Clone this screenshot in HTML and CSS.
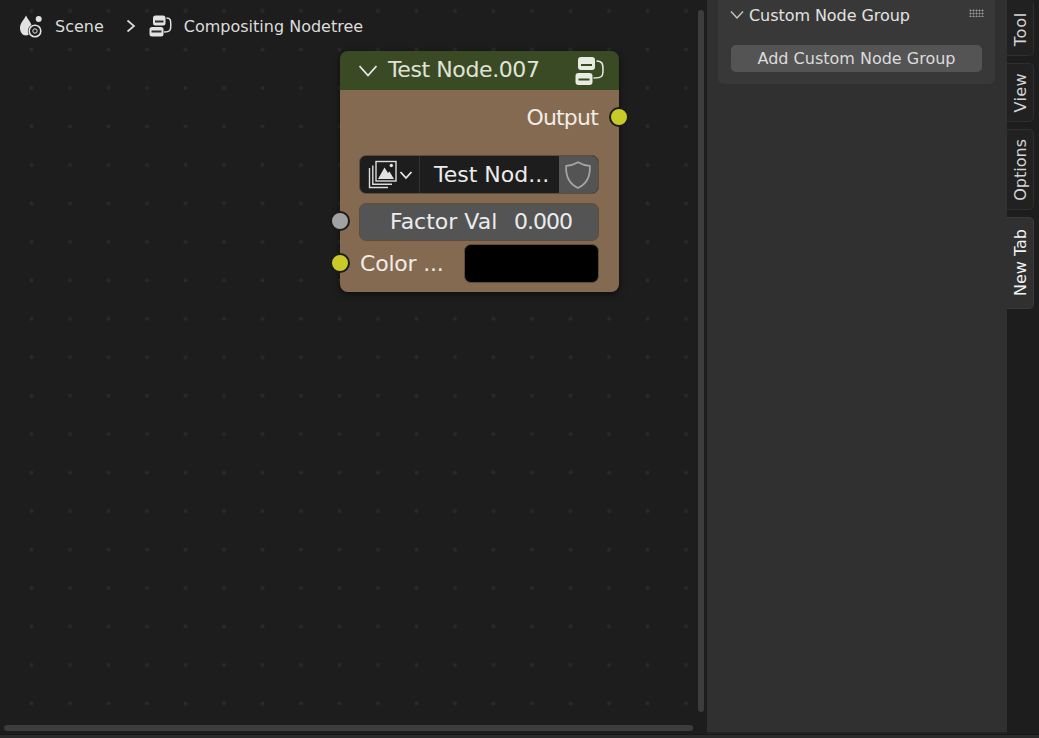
FILE: index.html
```html
<!DOCTYPE html>
<html lang="en">
<head>
<meta charset="utf-8">
<title>Compositing Nodetree</title>
<link rel="stylesheet" href="styles.css">
</head>
<body>
<div class="app">
  <div class="main">
    <section class="editor">
      <nav class="crumbs">
        <svg class="crumb-icon scene-icon" viewBox="0 0 24 24" width="24" height="24">
          <path class="fill" d="M7 1.500C9 6 13 9 13 14C13 18 10 21.500 7 21.500C3.500 21.500 1 18 1 14C1 9 5 6 7 1.500Z"/>
          <circle class="fill" cx="19.700" cy="5" r="3"/>
          <circle class="halo" cx="16" cy="17" r="7.200"/>
          <circle class="ring" cx="16" cy="17" r="5.800"/>
          <circle class="ring thin" cx="16" cy="17" r="2.200"/>
        </svg>
        <span class="crumb-text scene-text">Scene</span>
        <svg class="crumb-chevron" viewBox="0 0 12 16" width="12" height="16"><path d="M2.500 2.500L9 8L2.500 13.500"/></svg>
        <svg class="crumb-icon tree-icon" viewBox="0 0 24 24" width="24" height="24">
          <rect class="fill" x="4" y="1.500" width="12.500" height="10" rx="2.500"/>
          <rect class="fill" x="0.500" y="13" width="14" height="9.500" rx="2.500"/>
          <path class="slot" d="M6 7.500H14.500M2.500 17.500H12.500"/>
          <path class="link" d="M17.500 4C21.500 4 21.800 6 21.800 11C21.800 16 21.500 18 15 18"/>
        </svg>
        <span class="crumb-text">Compositing Nodetree</span>
      </nav>

      <article class="node">
        <header class="node-header">
          <svg class="chevron-down big" viewBox="0 0 18 12" width="18" height="12"><path d="M0.500 1L9 10.500L17.500 1"/></svg>
          <span class="node-title">Test Node.007</span>
          <svg class="node-icon tree-icon" viewBox="0 0 30 30" width="30" height="30">
            <rect class="fill" x="3" y="1" width="17" height="13" rx="3"/>
            <rect class="fill" x="0.500" y="17" width="17" height="12" rx="3"/>
            <path class="slot" d="M6 9H17M3.500 23.500H14.500"/>
            <path class="link" d="M21.500 5C27.500 5 28 8 28 14C28 20 27.500 22 18.500 22"/>
          </svg>
        </header>
        <div class="node-body">
          <div class="row output-row">
            <span class="label output-label">Output</span>
            <span class="socket yellow socket-right"></span>
          </div>
          <div class="id-picker">
            <div class="picker-browse">
              <svg class="image-icon" viewBox="0 0 30 30" width="30" height="30">
                <path class="frame" d="M1.500 8V27.500H20M4.800 5.500V24.200H24"/>
                <rect class="frame" x="8" y="1.500" width="20" height="19.500"/>
                <path class="fill" d="M10 19L16.500 7.500L20 13L21.500 11.500L26 19Z"/>
                <circle class="fill" cx="23.300" cy="5.500" r="1.700"/>
              </svg>
              <svg class="chevron-down" viewBox="0 0 14 10" width="14" height="10"><path d="M1.500 2L7 8L12.500 2"/></svg>
            </div>
            <div class="picker-name">Test Nod...</div>
            <div class="picker-shield">
              <svg class="shield" viewBox="0 0 28 30" width="28" height="30"><path d="M14 2.200C17.500 4.300 21 5.500 25.800 5.800C26.500 16 23.500 23.500 14 28C4.500 23.500 1.500 16 2.200 5.800C7 5.500 10.500 4.300 14 2.200Z"/></svg>
            </div>
          </div>
          <div class="row factor-row">
            <span class="socket grey socket-left"></span>
            <div class="slider"><span>Factor Val</span><span class="slider-value">0.000</span></div>
          </div>
          <div class="row color-row">
            <span class="socket yellow socket-left"></span>
            <span class="label color-label">Color ...</span>
            <div class="swatch"></div>
          </div>
        </div>
      </article>

      <div class="scroll scroll-v"></div>
      <div class="scroll scroll-h"></div>
    </section>

    <aside class="sidebar">
      <div class="panel">
        <div class="panel-head">
          <svg class="chevron-down small" viewBox="0 0 14 10" width="14" height="10"><path d="M1 1.500L7 8L13 1.500"/></svg>
          <span class="panel-title">Custom Node Group</span>
          <span class="grip"></span>
        </div>
        <button class="panel-button" type="button">Add Custom Node Group</button>
      </div>
    </aside>

    <div class="tabs">
      <div class="tab tab-tool"><span>Tool</span></div>
      <div class="tab tab-view"><span>View</span></div>
      <div class="tab tab-options"><span>Options</span></div>
      <div class="tab tab-new active"><span>New Tab</span></div>
    </div>
  </div>
  <div class="statusline"></div>
</div>
</body>
</html>
```
FILE: styles.css
```css
* { box-sizing: border-box; }
html, body { margin: 0; height: 100%; background: #1d1d1d; overflow: hidden; }
body { font-family: "DejaVu Sans", "Liberation Sans", sans-serif; color: #e6e6e6; }

.app { width: 1039px; height: 738px; display: flex; flex-direction: column; }
.main { flex: 1; display: flex; min-height: 0; }
.statusline { height: 4px; background: #2b2b2b; border-top: 1px solid #191919; }

/* node editor */
.editor {
  position: relative;
  width: 707px;
  background-color: #1d1d1d;
  background-image: radial-gradient(circle at center, #2c2c2c 0, #292929 1.2px, rgba(29,29,29,0) 2.6px);
  background-size: 38.5px 38.47px;
  background-position: 12.25px 30.25px;
}

.crumbs { position: absolute; left: 19px; top: 14px; display: flex; align-items: center; height: 24px; }
.crumb-text { font-size: 16px; color: #dcdcdc; white-space: nowrap; }
.crumb-icon { display: block; }
.scene-text { margin-left: 12px; }
.crumb-chevron { margin: 0 12px 0 21px; }
.crumb-chevron path { fill: none; stroke: #dcdcdc; stroke-width: 1.7; }
.tree-icon { margin-right: 11px; }

.fill { fill: #e2e2e2; stroke: none; }
.halo { fill: #1d1d1d; stroke: none; }
.ring { fill: #1d1d1d; stroke: #e2e2e2; stroke-width: 1.6; }
.ring.thin { stroke-width: 1; }
.slot { fill: none; stroke: #2f2f2f; stroke-width: 1.800; }
.link { fill: none; stroke: #e2e2e2; stroke-width: 1.500; }

.chevron-down path { fill: none; stroke: #e8e8e8; stroke-width: 1.800; }

/* node */
.node {
  position: absolute;
  left: 340px;
  top: 51px;
  width: 279px;
  border-radius: 8px;
  box-shadow: 0 2px 6px rgba(0,0,0,.55);
}
.node-header {
  height: 39px;
  display: flex;
  align-items: center;
  padding: 0 14px 0 19px;
  background: #3a4a25;
  border-radius: 8px 8px 0 0;
}
.node-title { font-size: 22px; letter-spacing: -.4px; color: #e0e4d8; margin: 0 0 2px 11px; flex: 1; white-space: nowrap; }
.node-icon.tree-icon { margin: 0; }
.node-icon .slot { stroke: #3a4a25; }
.node-icon .fill { fill: #e8ebe2; }
.node-icon .link { stroke: #e8ebe2; }

.node-body {
  background: #856a52;
  border-radius: 0 0 8px 8px;
  padding: 14px 20px 9px 19px;
  display: flex;
  flex-direction: column;
}
.row { position: relative; display: flex; align-items: center; }
.label { font-size: 22px; color: #f0ece6; white-space: nowrap; }
.output-label { letter-spacing: -.8px; margin-right: 1px; }
.output-row { height: 26px; margin-bottom: 25px; justify-content: flex-end; }

.socket {
  position: absolute;
  top: 50%;
  width: 20px;
  height: 20px;
  margin-top: -10px;
  border-radius: 50%;
  border: 2px solid #1b1b1b;
}
.yellow { background: #c9ca28; }
.grey { background: #a2a2a2; }
.socket-right { right: -30px; }
.socket-left { left: -29px; margin-top: -11px; }

.id-picker {
  height: 39px;
  display: flex;
  border-radius: 7px;
  overflow: hidden;
  background: #1d1d1d;
  border: 1px solid #5f4c3b;
}
.picker-browse { width: 60px; display: flex; align-items: center; padding-left: 8px; gap: 1px; border-right: 1px solid #333; }
.image-icon .frame { fill: none; stroke: #dcdcdc; stroke-width: 1.400; }
.image-icon { flex: none; }
.picker-name { flex: 1; font-size: 22px; color: #ececec; display: flex; align-items: center; padding-left: 14px; white-space: nowrap; }
.picker-shield { width: 39px; background: #545454; display: flex; align-items: center; justify-content: center; padding-right: 2px; }
.shield path { fill: none; stroke: #a6a6a6; stroke-width: 1.700; }

.factor-row { height: 38px; margin-top: 9px; }
.slider {
  flex: 1;
  height: 38px;
  display: flex;
  align-items: center;
  padding: 0 26px 1px 30px;
  justify-content: space-between;
  font-size: 22px;
  color: #ececec;
  background: #545454;
  border-radius: 7px;
  border: 1px solid #5f4c3b;
}
.slider-value { letter-spacing: -1px; }
.color-row { height: 39px; margin-top: 3px; justify-content: space-between; }
.color-label { margin-left: 1px; letter-spacing: -.2px; }
.swatch { width: 135px; height: 39px; background: #000; border-radius: 7px; border: 1px solid #5f4c3b; }

.scroll { position: absolute; background: #3d3d3d; border-radius: 3px; }
.scroll-v { left: 698px; top: 10px; width: 6px; height: 702px; }
.scroll-h { left: 4px; top: 725px; width: 689px; height: 6px; }

/* sidebar */
.sidebar { width: 300px; background: #303030; padding: 0 12px 0 11px; border-bottom: 2px solid #232323; }
.panel { height: 84px; background: #383838; border-radius: 0 0 6px 6px; padding: 0 13px; position: relative; }
.panel-head { height: 30px; display: flex; align-items: center; }
.chevron-down.small { margin: 0 5px 0 -1px; }
.chevron-down.small path { stroke: #c8c8c8; stroke-width: 1.400; }
.panel-title { font-size: 16px; letter-spacing: -.06px; color: #e2e2e2; white-space: nowrap; flex: 1; }
.grip {
  width: 15px;
  height: 8px;
  margin-right: -2px;
  margin-top: -4px;
  background-image: radial-gradient(circle, #9a9a9a .9px, transparent 1.100px);
  background-size: 3px 3px;
}
.panel-button {
  display: block;
  width: 251px;
  height: 27px;
  margin-top: 15px;
  padding: 0;
  font: inherit;
  font-size: 16px;
  color: #dcdcdc;
  background: #545454;
  border: 0;
  border-radius: 5px;
  text-align: center;
}

/* tabs */
.tabs { flex: 1; background: #1d1d1d; display: flex; flex-direction: column; gap: 7px; padding-right: 5px; }
.tab {
  display: flex;
  align-items: center;
  justify-content: center;
  background: #212121;
  border: 1px solid #2f2f2f;
  border-left: 0;
  border-radius: 0 5px 5px 0;
  font-size: 16px;
  font-kerning: none;
  color: #d4d4d4;
}
.tab span { writing-mode: vertical-rl; transform: rotate(180deg); white-space: nowrap; }
.tab-tool { height: 56px; border-top: 0; padding-top: 4px; }
.tab-tool span { letter-spacing: .8px; }
.tab-view { height: 59px; }
.tab-view span { letter-spacing: .4px; }
.tab-options { height: 81px; }
.tab-new { height: 92px; }
.tab.active { background: #303030; border-color: #3a3a3a; color: #f2f2f2; }
```
